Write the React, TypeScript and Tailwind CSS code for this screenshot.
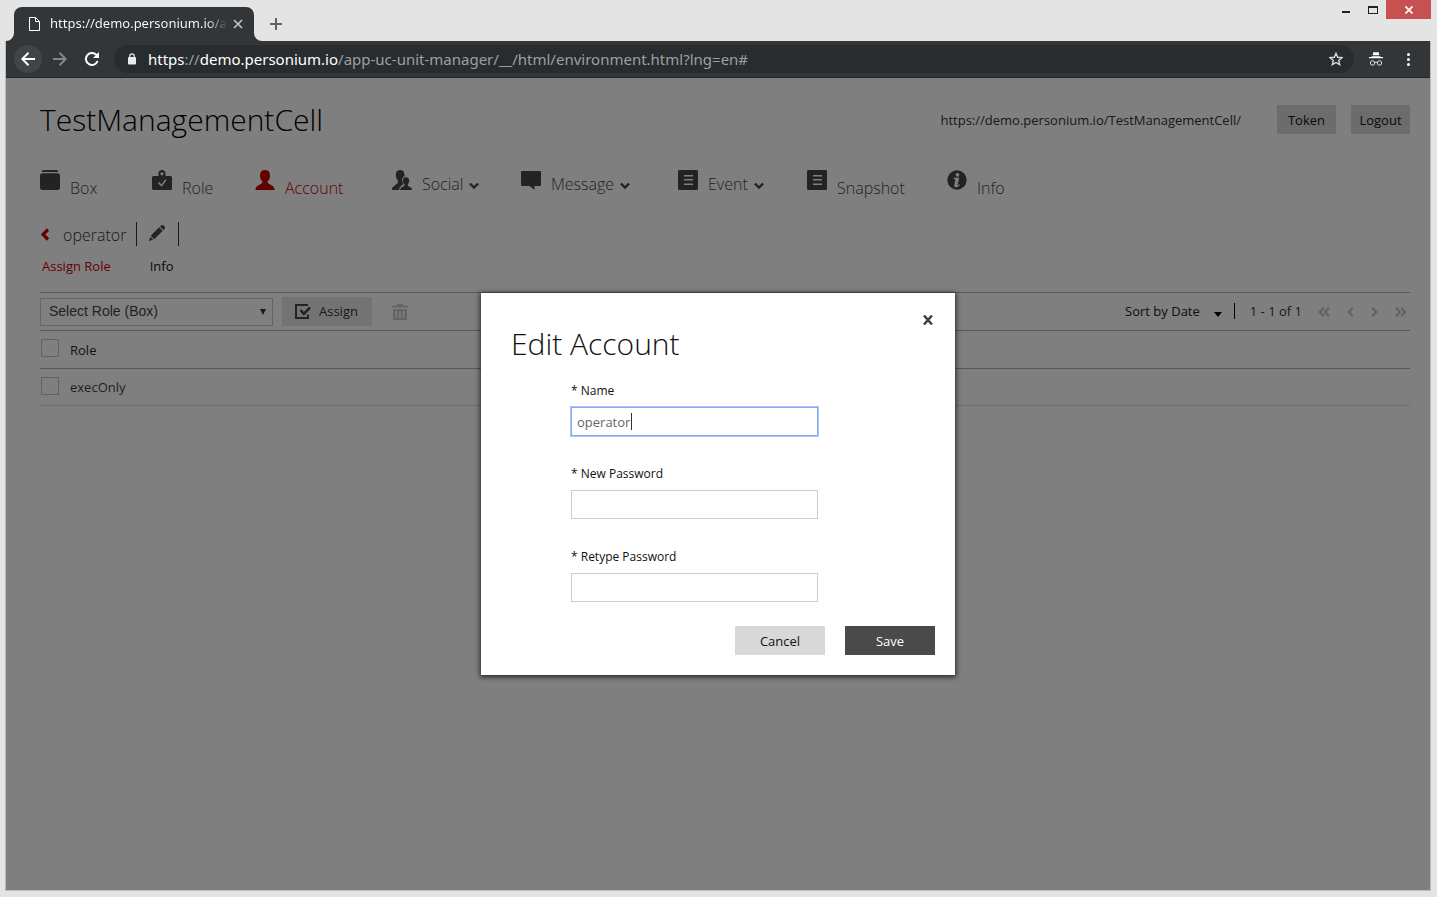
import React, { useState } from "react";

type IconProps = { className?: string };

const BoxIcon = () => (
  <svg width="20" height="20" viewBox="0 0 20 20" fill="currentColor" aria-hidden="true">
    <path d="M3.500 0h13a1.500 1.500 0 0 1 1.500 2H2A1.500 1.500 0 0 1 3.500 0Z" />
    <path d="M2.500 3.200h15A2.500 2.500 0 0 1 20 5.700v11.800a2.500 2.500 0 0 1-2.500 2.500h-15A2.500 2.500 0 0 1 0 17.500V5.700a2.500 2.500 0 0 1 2.500-2.500Z" />
  </svg>
);

const RoleIcon = () => (
  <svg width="20" height="20" viewBox="0 0 20 20" fill="currentColor" aria-hidden="true">
    <path
      fillRule="evenodd"
      d="M6.500 6V3.500a3.500 3.500 0 0 1 7 0V6h5A1.500 1.500 0 0 1 20 7.500v11a1.500 1.500 0 0 1-1.500 1.500h-17A1.500 1.500 0 0 1 0 18.500v-11A1.500 1.500 0 0 1 1.500 6ZM10 2.200a1.600 1.600 0 1 0 0 3.200 1.600 1.600 0 0 0 0-3.200ZM6 13.200l3.700 3.600 4.800-6.700-1.200-.9-3.800 5.200-2.400-2.300Z"
    />
  </svg>
);

const AccountIcon = () => (
  <svg width="20" height="20" viewBox="0 0 20 20" fill="currentColor" aria-hidden="true">
    <path d="M10 0c3 0 5 1.700 5 5.200 0 2.800-.9 4.900-2.300 6.100v1.500c.4 1 5.800 3 6.600 5.200l.2 2H.5l.2-2c.8-2.200 6.200-4.200 6.600-5.200v-1.500C5.900 10.100 5 8 5 5.200 5 1.700 7 0 10 0Z" />
  </svg>
);

const SocialIcon = () => (
  <svg width="20" height="20" viewBox="0 0 20 20" fill="currentColor" aria-hidden="true">
    <path d="M8.200 0c2.700 0 4.200 1.700 4.200 4.600v1.600c-1.500.7-2.200 2-2.200 3.800 0 1.600.4 2.800 1.200 3.700-.2 1.100-3.200 2-4 4.600L7.200 20H0v-1.400c.4-2 5.300-4.500 5.900-6.100v-2C4.600 9.400 3.800 7.400 3.800 4.800 3.800 1.700 5.400 0 8.200 0Z" />
    <path d="M14 7.200c2 0 3.200 1.200 3.200 3.300 0 1.700-.6 3-1.500 3.900v1.200c.4.800 3.900 1.800 4.300 3.400v1H8.300v-1c.4-1.600 3.800-2.600 4.200-3.400v-1.200c-.9-.9-1.600-2.200-1.600-3.900 0-2.100 1.100-3.300 3.100-3.300Z" />
  </svg>
);

const MessageIcon = () => (
  <svg width="20" height="20" viewBox="0 0 20 20" fill="currentColor" aria-hidden="true">
    <path d="M1 1h18a1 1 0 0 1 1 1v13a1 1 0 0 1-1 1h-5.500v4L8.500 16H1a1 1 0 0 1-1-1V2a1 1 0 0 1 1-1Z" />
  </svg>
);

const ListIcon = () => (
  <svg width="20" height="20" viewBox="0 0 20 20" fill="currentColor" aria-hidden="true">
    <path
      fillRule="evenodd"
      d="M1.500 0h17A1.500 1.500 0 0 1 20 1.500v17a1.500 1.500 0 0 1-1.500 1.500h-17A1.500 1.500 0 0 1 0 18.500v-17A1.500 1.500 0 0 1 1.500 0ZM6 5v1.500h9V5ZM6 9v1.500h9V9ZM6 13.500V15h9v-1.500Z"
    />
  </svg>
);

const InfoIcon = () => (
  <svg width="20" height="20" viewBox="0 0 20 20" aria-hidden="true">
    <circle cx="10" cy="10" r="9.700" fill="currentColor" />
    <circle cx="10.500" cy="4.800" r="1.900" fill="#fff" />
    <path d="M6.800 7.800h5.500l-1.700 6.700c-.1.900.6.800 2-.3l.5.600c-1.400 1.700-2.700 2.500-4 2.500-1.600 0-2.200-.9-1.800-2.400l1.200-5.200-1.700-.6Z" fill="#fff" />
  </svg>
);

const Chevron = ({ className }: IconProps) => (
  <svg width="10" height="8" viewBox="0 0 10 8" fill="none" stroke="currentColor" strokeWidth="2.400" className={className} aria-hidden="true">
    <path d="M.9 1.500 5 5.500l4.100-4" />
  </svg>
);

const PageArrow = ({ double, flip }: { double?: boolean; flip?: boolean }) => (
  <svg
    width={double ? 12 : 7}
    height="10"
    viewBox={double ? "0 0 12 10" : "0 0 7 10"}
    fill="none"
    stroke="currentColor"
    strokeWidth="2.300"
    className={flip ? "rotate-180" : ""}
    aria-hidden="true"
  >
    <path d="M5.800 .8 1.800 5l4 4.200" />
    {double && <path d="M11 .8 7 5l4 4.200" />}
  </svg>
);

const navItems = [
  { label: "Box", icon: <BoxIcon />, width: "w-28" },
  { label: "Role", icon: <RoleIcon />, width: "w-[103px]" },
  { label: "Account", icon: <AccountIcon />, width: "w-[137px]", active: true },
  { label: "Social", icon: <SocialIcon />, width: "w-[129px]", menu: true },
  { label: "Message", icon: <MessageIcon />, width: "w-[157px]", menu: true },
  { label: "Event", icon: <ListIcon />, width: "w-[129px]", menu: true },
  { label: "Snapshot", icon: <ListIcon />, width: "w-[140px]" },
  { label: "Info", icon: <InfoIcon />, width: "w-24" },
];

function WindowFrame() {
  return (
    <header className="flex h-[41px] items-start justify-between pl-[9px] font-['Noto_Sans',sans-serif]">
      <div className="flex h-full items-end">
        <div className="relative flex h-[34px] w-60 items-center rounded-t-lg bg-[#323639] pl-[15px] pr-[11px] text-[13px] text-white">
          <svg width="8" height="8" className="absolute -left-2 bottom-0" aria-hidden="true">
            <path d="M8 0v8H0a8 8 0 0 0 8-8Z" fill="#323639" />
          </svg>
          <svg width="8" height="8" className="absolute -right-2 bottom-0" aria-hidden="true">
            <path d="M0 0v8h8a8 8 0 0 1-8-8Z" fill="#323639" />
          </svg>
          <svg width="11" height="14" viewBox="0 0 11 14" fill="none" stroke="#fff" className="shrink-0" aria-hidden="true">
            <path d="M.5.500h6l4 4v9H.5ZM6.500.500v4h4" />
          </svg>
          <span className="ml-[10px] w-[178px] overflow-hidden whitespace-nowrap bg-linear-to-r from-white from-88% to-transparent bg-clip-text text-transparent">
            https://demo.personium.io/ap
          </span>
          <button aria-label="Close tab" className="ml-auto">
            <svg width="10" height="10" viewBox="0 0 10 10" stroke="#c4c6c8" strokeWidth="1.600" aria-hidden="true">
              <path d="m1 1 8 8M9 1 1 9" />
            </svg>
          </button>
        </div>
        <button aria-label="New tab" className="mb-[11px] ml-4">
          <svg width="12" height="12" viewBox="0 0 12 12" stroke="#5f6368" strokeWidth="2" aria-hidden="true">
            <path d="M6 0v12M0 6h12" />
          </svg>
        </button>
      </div>
      <div className="flex h-[19px] items-center">
        <button aria-label="Minimize" className="pr-[18px] pt-[5px]">
          <span className="block h-0.5 w-2 bg-[#222]" />
        </button>
        <button aria-label="Maximize" className="pr-2">
          <span className="block h-2 w-[10px] border border-t-2 border-[#222]" />
        </button>
        <button aria-label="Close" className="flex h-[19px] w-[45px] items-center justify-center bg-[#c75050]">
          <svg width="8" height="8" viewBox="0 0 8 8" stroke="#fff" strokeWidth="1.700" aria-hidden="true">
            <path d="m.5.500 7 7M7.500.500l-7 7" />
          </svg>
        </button>
      </div>
    </header>
  );
}

function AddressBar() {
  return (
    <div className="flex h-[37px] items-center border-b border-[#232629] bg-[#323639] px-2 font-['Noto_Sans',sans-serif]">
      <button aria-label="Back" className="flex size-7 items-center justify-center rounded-full bg-[#414548]">
        <svg width="14" height="14" viewBox="0 0 14 14" fill="none" stroke="#fff" strokeWidth="2" aria-hidden="true">
          <path d="M14 7H1.500M7.500.800 1.300 7l6.200 6.200" />
        </svg>
      </button>
      <button aria-label="Forward" className="ml-[11px]">
        <svg width="14" height="14" viewBox="0 0 14 14" fill="none" stroke="#85888a" strokeWidth="2" aria-hidden="true">
          <path d="M0 7h12.500M6.500.800 12.700 7l-6.200 6.200" />
        </svg>
      </button>
      <button aria-label="Reload" className="ml-[18px]">
        <svg width="14" height="14" viewBox="0 0 14 14" fill="none" stroke="#fff" strokeWidth="2" aria-hidden="true">
          <path d="M12.600 9A6 6 0 1 1 11.300 2.800L12.500 4" />
          <path d="M14 0v6H8Z" fill="#fff" stroke="none" />
        </svg>
      </button>
      <div className="ml-[15px] flex h-7 min-w-0 flex-1 items-center rounded-full bg-[#282c2f] pl-[14px] pr-[11px]">
        <svg width="8" height="12" viewBox="0 0 8 12" aria-hidden="true">
          <rect y="4" width="8" height="7.500" rx="1" fill="#e8eaed" />
          <path d="M1.800 4.500V3a2.200 2.200 0 0 1 4.400 0v1.500" fill="none" stroke="#e8eaed" strokeWidth="1.200" />
        </svg>
        <p className="ml-3 min-w-0 flex-1 truncate text-[15px] leading-[26px] text-[#9aa0a6]">
          <span className="text-white">https</span>://<span className="text-white">demo.personium.io</span>
          /app-uc-unit-manager/__/html/environment.html?lng=en#
        </p>
        <button aria-label="Bookmark">
          <svg width="14" height="14" viewBox="0 0 14 14" fill="none" stroke="#d5d7da" strokeWidth="1.400" aria-hidden="true">
            <path d="m7 1.300 1.700 4 4.300.4-3.300 2.800 1 4.200L7 10.500l-3.700 2.200 1-4.200L1 5.700l4.300-.4Z" />
          </svg>
        </button>
      </div>
      <svg width="14" height="14" viewBox="0 0 14 14" className="ml-[15px]" aria-hidden="true">
        <path d="M4.500 0 7 .6 9.500 0l.8 3.300H3.700ZM3 4.200h8l.8.900H14v1.200H0V5.100h2.200Z" fill="#fff" />
        <g fill="none" stroke="#e0e2e4" strokeWidth="1">
          <circle cx="3.500" cy="11" r="2.200" />
          <circle cx="10.500" cy="11" r="2.200" />
          <path d="M5.500 10.500q1.500-.8 3 0" />
        </g>
      </svg>
      <button aria-label="Browser menu" className="ml-6 mr-3">
        <svg width="3" height="13" viewBox="0 0 3 13" fill="#fff" aria-hidden="true">
          <circle cx="1.500" cy="1.500" r="1.500" />
          <circle cx="1.500" cy="6.500" r="1.500" />
          <circle cx="1.500" cy="11.500" r="1.500" />
        </svg>
      </button>
    </div>
  );
}

function EditDialog() {
  const [name, setName] = useState("operator");
  const field = "block h-[29px] w-full border bg-white px-[5px] text-[13px] text-[#666] outline-none";
  return (
    <div className="absolute inset-0 flex items-center justify-center bg-black/50">
      <form
        role="dialog"
        aria-labelledby="dialog-title"
        onSubmit={(e) => e.preventDefault()}
        className="relative w-[474px] bg-white pt-[31px] pb-5 text-[#111] shadow-[0_1px_5px_1px_rgba(0,0,0,0.7)]"
      >
        <button type="button" aria-label="Close dialog" className="absolute right-[22px] top-[22px]">
          <svg width="10" height="10" viewBox="0 0 10 10" stroke="#444" strokeWidth="2.600" aria-hidden="true">
            <path d="m1 .500 8 9M9 .500l-8 9" />
          </svg>
        </button>
        <h2 id="dialog-title" className="px-[30px] text-[30px] leading-10 font-light">
          Edit Account
        </h2>
        <div className="mx-[90px] mt-[18px] flex w-[247px] flex-col gap-[29px]">
          <div>
            <label htmlFor="account-name" className="mb-[7px] block text-xs leading-[18px]">
              * Name
            </label>
            <div className="relative">
              <input
                id="account-name"
                value={name}
                onChange={(e) => setName(e.target.value)}
                className={`${field} border-[#8aaae8] ring-1 ring-[#a8c7fa]`}
              />
              <span className="absolute left-[60px] top-[6px] h-[17px] w-px bg-[#333]" />
            </div>
          </div>
          <div>
            <label htmlFor="new-password" className="mb-[7px] block text-xs leading-[18px]">
              * New Password
            </label>
            <input id="new-password" type="password" className={`${field} border-[#ccc]`} />
          </div>
          <div>
            <label htmlFor="retype-password" className="mb-[7px] block text-xs leading-[18px]">
              * Retype Password
            </label>
            <input id="retype-password" type="password" className={`${field} border-[#ccc]`} />
          </div>
        </div>
        <div className="mt-6 flex justify-end gap-5 pr-5 text-[13px]">
          <button type="button" className="h-[29px] w-[90px] bg-[#d8d8d8] pt-0.5">
            Cancel
          </button>
          <button type="submit" className="h-[29px] w-[90px] bg-[#4a4a4a] pt-0.5 text-white">
            Save
          </button>
        </div>
      </form>
    </div>
  );
}

export default function App() {
  const check = "block size-[18px] appearance-none border border-[#c4c4c4]";
  return (
    <div className="flex min-h-screen flex-col bg-[#e4e4e4] pb-1.5 pl-[5px] pr-1.5 font-['Open_Sans',sans-serif]">
      <WindowFrame />
      <div className="flex flex-1 flex-col border-x border-b border-[#bcbcbc]">
        <AddressBar />
        <main className="relative flex-1 bg-white pl-[34px] pr-5 pt-[27px] text-[13px] text-[#111]">
          <div className="flex h-[29px] items-center">
            <h1 className="text-[30px] leading-[29px] font-light text-black">TestManagementCell</h1>
            <span className="ml-auto pt-0.5 text-[#333]">https://demo.personium.io/TestManagementCell/</span>
            <button className="ml-9 h-[29px] w-[59px] bg-[#d8d8d8] pt-0.5">Token</button>
            <button className="ml-[15px] h-[29px] w-[59px] bg-[#d8d8d8] pt-0.5">Logout</button>
          </div>

          <nav className="mt-9 flex h-[30px] text-base font-light">
            {navItems.map((item) => (
              <a
                key={item.label}
                href="#"
                className={`flex shrink-0 items-start gap-[10px] ${item.width} ${item.active ? "text-[#c80000]" : "text-[#464646]"}`}
              >
                {item.icon}
                <span className={`flex items-center gap-1.5 leading-5 ${item.menu ? "mt-1" : "mt-2"}`}>
                  {item.label}
                  {item.menu && <Chevron className="mt-[3px]" />}
                </span>
              </a>
            ))}
          </nav>

          <div className="mt-[22px] flex h-6 items-center">
            <button aria-label="Back to accounts" className="text-[#c80000]">
              <svg width="10" height="13" viewBox="0 0 10 13" fill="none" stroke="currentColor" strokeWidth="3.200" aria-hidden="true">
                <path d="M8 1.500 3 6.500l5 5" />
              </svg>
            </button>
            <span className="ml-[13px] w-[73px] pt-0.5 text-base font-light text-[#333]">operator</span>
            <span className="h-6 w-px bg-[#333]" />
            <button aria-label="Edit" className="mx-3 mb-1 text-[#464646]">
              <svg width="17" height="17" viewBox="0 0 17 17" fill="currentColor" aria-hidden="true">
                <path d="M11 2.500 14.500 6l1.300-1.300a2 2 0 0 0 0-2L14.300 1.200a2 2 0 0 0-2 0ZM10.200 3.300 13.700 6.800 5.200 15.200 1.700 11.800ZM1.200 12.800l3 3L0 17Z" />
              </svg>
            </button>
            <span className="h-6 w-px bg-[#333]" />
          </div>

          <div className="mt-[11px] flex h-5 items-center gap-[39px] pl-0.5">
            <a href="#" className="text-[#c80000]">Assign Role</a>
            <a href="#">Info</a>
          </div>

          <div className="mt-[15px] flex h-[38px] items-center border-t border-[#b0b0b0]">
            <div className="relative w-[233px]">
              <select
                aria-label="Select role"
                className="block h-7 w-full appearance-none border border-[#c4c8cc] bg-white pb-0.5 pl-2 font-['Liberation_Sans',sans-serif] text-sm text-[#444]"
              >
                <option>Select Role (Box)</option>
              </select>
              <svg width="6" height="6" className="pointer-events-none absolute right-[7px] top-[11px]" aria-hidden="true">
                <path d="M0 0h6L3 6Z" fill="#333" />
              </svg>
            </div>
            <button className="ml-[9px] flex h-[29px] w-[90px] items-center gap-2 bg-[#e6e6e6] pl-[13px] text-[#333]">
              <svg width="16" height="16" viewBox="0 0 16 16" fill="none" stroke="#464646" strokeWidth="2" aria-hidden="true">
                <path d="M13 1H1v13h12v-3.500" />
                <path d="m5.500 6 3.300 3.800 6.200-6.300" strokeWidth="2.600" />
              </svg>
              Assign
            </button>
            <button aria-label="Delete" className="ml-5 text-[#c8c8c8]">
              <svg width="16" height="16" viewBox="0 0 16 16" fill="currentColor" aria-hidden="true">
                <path fillRule="evenodd" d="M5 0h6v1.500h5v2H0v-2h5ZM1 5h14v11H1ZM3.500 7v7H5V7Zm3.700 0v7h1.500V7ZM11 7v7h1.500V7Z" />
              </svg>
            </button>
            <button className="ml-auto flex items-center text-[#222]">
              Sort by Date
              <svg width="8" height="5" className="ml-[14px] mt-[5px]" aria-hidden="true">
                <path d="M0 0h8L4 5Z" fill="#000" />
              </svg>
            </button>
            <span className="mb-0.5 ml-3 h-4 w-px bg-black" />
            <span className="ml-[15px] mr-4 text-[#333]">1 - 1 of 1</span>
            <div className="flex items-center gap-[17px] pr-[3px] text-[#c4c4c4]">
              <button aria-label="First page"><PageArrow double /></button>
              <button aria-label="Previous page"><PageArrow /></button>
              <button aria-label="Next page"><PageArrow flip /></button>
              <button aria-label="Last page"><PageArrow double flip /></button>
            </div>
          </div>

          <table className="w-full border-collapse text-left text-[#222]">
            <thead>
              <tr className="h-[38px] border-y border-[#b0b0b0]">
                <th className="w-[30px] pb-[3px] pl-px font-normal">
                  <input type="checkbox" aria-label="Select all roles" className={check} />
                </th>
                <th className="pt-0.5 font-normal">Role</th>
              </tr>
            </thead>
            <tbody>
              <tr className="h-[37px] border-b border-[#dcdcdc] text-[#444]">
                <td className="pb-[3px] pl-px">
                  <input id="role-exec" type="checkbox" className={check} />
                </td>
                <td className="pt-0.5">
                  <label htmlFor="role-exec">execOnly</label>
                </td>
              </tr>
            </tbody>
          </table>

          <EditDialog />
        </main>
      </div>
    </div>
  );
}
